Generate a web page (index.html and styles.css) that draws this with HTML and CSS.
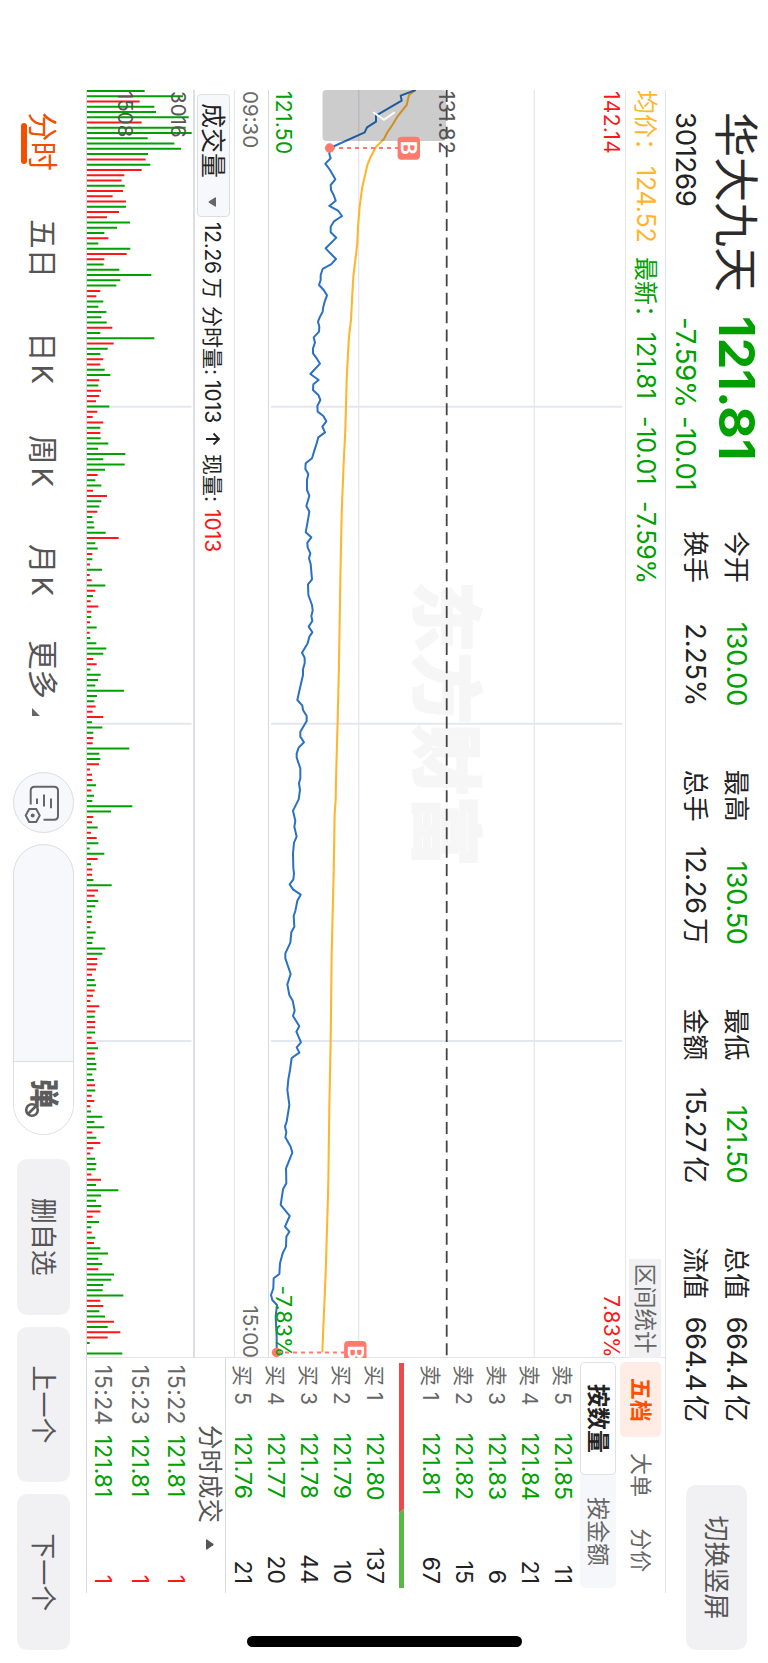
FILE: index.html
```html
<!DOCTYPE html>
<html lang="zh-CN">
<head>
<meta charset="utf-8">
<title>华大九天 301269</title>
<link rel="stylesheet" href="styles.css">
</head>
<body>
<div class="viewport">
<div class="stage">
  <header class="header">
    <div class="quote">
      <div class="quote-top"><h1 class="name">华大九天</h1><span class="price down">121.81</span></div>
      <div class="quote-sub"><span class="code">301269</span><span class="pct down">-7.59%</span><span class="down">-10.01</span></div>
    </div>
    <dl class="stats">
      <div class="stat"><dt>今开</dt><dd class="down">130.00</dd></div>
      <div class="stat"><dt>最高</dt><dd class="down">130.50</dd></div>
      <div class="stat"><dt>最低</dt><dd class="down">121.50</dd></div>
      <div class="stat"><dt>总值</dt><dd>664.4<small>亿</small></dd></div>
      <div class="stat"><dt>换手</dt><dd>2.25%</dd></div>
      <div class="stat"><dt>总手</dt><dd>12.26<small>万</small></dd></div>
      <div class="stat"><dt>金额</dt><dd>15.27<small>亿</small></dd></div>
      <div class="stat"><dt>流值</dt><dd>664.4<small>亿</small></dd></div>
    </dl>
    <button class="btn rotate-btn">切换竖屏</button>
  </header>

  <main class="main">
    <section class="charts">
      <div class="info">
        <span class="avg info-a">均价：</span><span class="avg info-b">124.52</span>
        <span class="down info-c">最新：</span><span class="down info-d">121.81</span>
        <span class="down info-e">-10.01</span><span class="down">-7.59%</span>
        <span class="range">区间统计</span>
      </div>
      <div class="plot">
        <svg class="canvas" width="1268" height="357" viewBox="90 143 1268 357">
          <text class="watermark" x="581" y="348">东方财富</text>
          <g class="grid">
            <path d="M90 233.7H1358M90 409.3H1358"/>
            <path class="grid-v" d="M406.7 146V497M723.8 146V497M1041 146V497"/>
          </g>
          <path class="axis" d="M90 499.5H1358"/>
          <path class="mid" d="M90 321.3H1358"/>
          <g id="lines"></g>
          <path class="shade" d="M90 322H137Q141 322 141 326V441.500Q141 445.500 137 445.500H94Q90 445.500 90 441.500V326Q90 322 94 322Z"/>
          <path class="chev" d="M112.300 394.700L119.700 384L112.300 373.300"/>
          <g class="mark">
            <path d="M148 437V370M1352.500 491V424"/>
            <circle cx="148" cy="438.400" r="4.700"/><circle cx="1352.500" cy="491.500" r="4.700"/>
            <rect x="136.700" y="348" width="23" height="22.400" rx="4"/>
            <rect x="1341" y="401.500" width="23" height="22.400" rx="4"/>
            <text x="140.800" y="367">B</text><text x="1345.200" y="420.500">B</text>
          </g>
        </svg>
        <span class="lab top-l up">142.14</span><span class="lab top-r up">7.83%</span>
        <span class="lab mid-l">131.82</span>
        <span class="lab bot-l down">121.50</span><span class="lab bot-r down">-7.83%</span>
      </div>
      <div class="times"><span>09:30</span><span>15:00</span></div>
      <div class="vol-head">
        <div class="select">成交量<svg width="10" height="8" viewBox="0 0 10 8"><path d="M1 0H9Q10 0 9.500 1L5.700 7Q5 8 4.300 7L.5 1Q0 0 1 0Z"/></svg></div>
        <span class="v-a">12.26<small>万</small></span><span class="v-b">分时量:</span><span class="v-c">1013</span>
        <svg class="arrow" width="14" height="16" viewBox="0 0 14 16"><path d="M7 15V2M1.500 7.500L7 2L12.500 7.500"/></svg>
        <span class="v-d">现量:</span><span class="up">1013</span>
      </div>
      <div class="volume">
        <svg class="canvas" width="1268" height="106" viewBox="90 575.500 1268 106">
          <path class="grid-v" d="M406.700 577V681M723.800 577V681M1041 577V681"/>
          <g id="bars"></g>
        </svg>
        <span class="lab vol-1">3016</span><span class="lab vol-2">1508</span>
      </div>
    </section>

    <aside class="panel">
      <nav class="tabs"><span class="tab on">五档</span><span class="tab">大单</span><span class="tab">分价</span></nav>
      <div class="seg"><span class="seg-item on">按数量</span><span class="seg-item">按金额</span></div>
      <div class="book sell">
        <div class="row"><i>卖 5</i><b>121.85</b><em>11</em></div>
        <div class="row"><i>卖 4</i><b>121.84</b><em>21</em></div>
        <div class="row"><i>卖 3</i><b>121.83</b><em>6</em></div>
        <div class="row"><i>卖 2</i><b>121.82</b><em>15</em></div>
        <div class="row"><i>卖 1</i><b>121.81</b><em>67</em></div>
      </div>
      <svg class="ratio" width="225" height="5" viewBox="0 0 225 5"><path fill="#ee4a4a" d="M0 0H146L150 5H0Z"/><path fill="#58b947" d="M146 0H225V5H150Z"/></svg>
      <div class="book buy">
        <div class="row"><i>买 1</i><b>121.80</b><em>137</em></div>
        <div class="row"><i>买 2</i><b>121.79</b><em>10</em></div>
        <div class="row"><i>买 3</i><b>121.78</b><em>44</em></div>
        <div class="row"><i>买 4</i><b>121.77</b><em>20</em></div>
        <div class="row"><i>买 5</i><b>121.76</b><em>21</em></div>
      </div>
      <div class="deal-head">分时成交<svg width="11" height="8" viewBox="0 0 11 8"><path d="M1 8H10Q11 8 10.500 7L6.300 .8Q5.500 0 4.700 .8L.5 7Q0 8 1 8Z"/></svg></div>
      <div class="deals">
        <div class="row"><i>15:22</i><b>121.81</b><em class="up">1</em></div>
        <div class="row"><i>15:23</i><b>121.81</b><em class="up">1</em></div>
        <div class="row"><i>15:24</i><b>121.81</b><em class="up">1</em></div>
      </div>
    </aside>
  </main>

  <footer class="footer">
    <nav class="periods">
      <span class="p p1 on">分时</span><span class="p p2">五日</span><span class="p p3">日<u>K</u></span><span class="p p4">周<u>K</u></span><span class="p p5">月<u>K</u></span><span class="p p6">更多<svg width="8" height="8" viewBox="0 0 8 8"><path d="M8 0V8H0Z"/></svg></span>
    </nav>
    <div class="round">
      <svg width="60" height="60" viewBox="0 0 60 60">
        <path d="M31.500 42.300H17.800Q13.800 42.300 13.800 38.300V19Q13.800 15 17.800 15H42.800Q46.800 15 46.800 19V29.500"/>
        <path d="M25.500 22H35.200M21.500 29H33.500M25.500 36H31"/>
        <path d="M42.500 33.300L49 36.800V43.800L42.500 47.300L36 43.800V36.800Z"/>
        <circle class="dot" cx="42.500" cy="40.300" r="2"/>
      </svg>
    </div>
    <div class="danmu">
      <div class="danmu-btn"><span>弹</span>
        <svg class="ban" width="16" height="16" viewBox="0 0 16 16"><circle cx="8" cy="8" r="5.800"/><path d="M4 4L12 12"/></svg>
      </div>
    </div>
    <div class="actions"><button class="btn">删自选</button><button class="btn">上一个</button><button class="btn">下一个</button></div>
  </footer>
  <div class="home"></div>
</div>
</div>
<script src="chart.js"></script>
</body>
</html>
```

FILE: styles.css
```css
* { box-sizing: border-box; margin: 0; padding: 0; }
html, body { width: 768px; height: 1663px; overflow: hidden; background: #fff; }
.viewport { width: 768px; height: 1663px; overflow: hidden; }
.stage {
  position: relative;
  width: 1663px; height: 768px;
  display: grid; grid-template-rows: 102px 580px 86px;
  transform-origin: 0 0; transform: translateX(768px) rotate(90deg);
  font-family: Inter, "Noto Sans CJK SC", sans-serif;
  color: #222; background: #fff; line-height: 1; white-space: nowrap;
}
.down { color: #00a000; }
.up { color: #fb1818; }
i, em, b, u { font-style: normal; font-weight: 400; text-decoration: none; }
small { font-size: inherit; margin-left: 4px; letter-spacing: 0; }
button { border: 0; font-family: inherit; }
.btn { background: #f1f1f4; color: #555; border-radius: 10px; font-size: 26px; line-height: 1; }

.header { display: flex; padding: 0 13px 0 112px; }
.quote { width: 419px; }
.quote-top { display: flex; height: 62px; align-items: center; }
.name { width: 204px; padding-top: 2px; font-size: 45px; font-weight: 400; letter-spacing: 0; color: #2b2b2b; }
.price { font-size: 50px; font-weight: 700; letter-spacing: .1px; }
.quote-sub { display: flex; height: 40px; padding-top: 1px; align-items: center; font-size: 27.500px; letter-spacing: -.3px; }
.code { width: 205px; }
.pct { width: 99px; }
.stats { width: 892px; padding-top: 11px; display: grid; grid-template-columns: repeat(4, 175px); column-gap: 63.700px; grid-auto-rows: 41px; font-size: 27px; letter-spacing: -.2px; }
.stat { display: flex; justify-content: space-between; align-items: center; }
.stat dt { font-size: 26px; letter-spacing: 0; }
.rotate-btn { width: 165px; height: 61px; margin: 21px 0 0 62px; flex: none; }

.main { display: grid; grid-template-columns: 1268px 235px; margin-left: 90px; width: 1503px; border-top: 1px solid #e3e4ea; border-bottom: 1px solid #d9dadf; }
.charts { display: grid; grid-template-rows: 40px 357px 34px 41px 106px; border-right: 1px solid #e3e4ea; }
.info { display: flex; align-items: center; border-bottom: 1px solid #e6e7ee; font-size: 25px; letter-spacing: -.2px; }
.avg { color: #ffb52e; }
.info-a { width: 76px; font-size: 24px; letter-spacing: 0; }
.info-b { width: 91px; }
.info-c { width: 75px; font-size: 24px; letter-spacing: 0; }
.info-d { width: 84px; }
.info-e { width: 85px; }
.range { margin-left: auto; width: 99px; height: 32px; line-height: 32px; text-align: center; background: #f1f1f4; color: #666; font-size: 22.500px; letter-spacing: 0; }
.plot, .volume { position: relative; }
.canvas { display: block; }
.grid path, .grid-v { stroke: #e5e7f0; stroke-width: 1.300; fill: none; }
.grid .grid-v, .grid-v { stroke-width: 2; }
.axis { stroke: #d8d9df; stroke-width: 1.200; }
.mid { stroke: #444; stroke-width: 1.800; stroke-dasharray: 12 6.430; }
.watermark { font: 900 71.500px "Noto Sans CJK SC", sans-serif; fill: #f6f6f6; stroke: #f6f6f6; stroke-width: 1.500; }
.price-line { fill: none; stroke: #2a70c5; stroke-width: 6; stroke-linejoin: round; }
.avg-line { fill: none; stroke: #ffb52e; stroke-width: 6.200; stroke-linejoin: round; }
.shade { fill: #000; opacity: .2; }
.chev { fill: none; stroke: #fff; stroke-width: 2; }
.mark path { stroke: #fe7a6c; stroke-width: 2; stroke-dasharray: 4 4; }
.mark circle, .mark rect { fill: #fe7a6c; }
.mark text { font: 600 21.500px Inter, sans-serif; fill: #fff; }
.lab { position: absolute; font-size: 21px; letter-spacing: .3px; color: #555; }
.lab.up { color: #fb1818; }
.lab.down { color: #00a000; }
.top-l { left: 1px; top: 3px; }
.top-r { right: 0; top: 3px; }
.mid-l { left: 1px; top: 168px; }
.bot-l { left: 1px; top: 331px; }
.bot-r { right: 0; top: 331px; }
.vol-1 { left: 1px; top: 5px; }
.vol-2 { left: 1px; top: 58px; }
.lab.vol-1, .lab.vol-2 { font-size: 20.500px; letter-spacing: 0; }
.times { display: flex; justify-content: space-between; align-items: center; padding: 4px 0 0 1px; font-size: 20.500px; color: #6a6a6a; border-bottom: 1px solid #e6e7ee; }
.vol-head { display: flex; align-items: center; padding: 3px 0 0 4px; font-size: 21px; border-bottom: 2px solid #dedfe6; }
.select { width: 123px; height: 33px; display: flex; align-items: center; padding: 2px 0 0 8px; font-size: 25px; background: #f7f8fb; border: 1px solid #dcdee5; border-radius: 4px; margin: -1px 5px 0 0; }
.select svg { margin-left: 19px; fill: #666; }
.v-a { width: 84px; letter-spacing: -.3px; }
.v-b { width: 74px; }
.v-c { width: 52px; }
.arrow { fill: none; stroke: #222; stroke-width: 1.800; margin-right: 8px; }
.v-d { width: 55px; }
.bar-down { stroke: #00a000; }
.bar-up { stroke: #fb1818; }
.bar-down, .bar-up { stroke-width: 2; fill: none; }

.panel { padding: 4px 5px 0 4px; }
.tabs { display: flex; height: 40.500px; }
.tab { width: 75.500px; display: flex; align-items: center; justify-content: center; font-size: 22px; color: #666; }
.tab.on { background: #ffece4; color: #ff5000; font-weight: 700; border-radius: 5px; }
.seg { display: flex; height: 36px; margin: 4px 0 1px; background: #f6f7fa; border-radius: 5px; }
.seg-item { width: 113px; display: flex; align-items: center; justify-content: center; padding-top: 1px; font-size: 23px; color: #666; }
.seg-item.on { background: #fff; border: 1px solid #dfe0e6; border-radius: 5px; color: #222; font-weight: 700; }
.row { display: grid; grid-template-columns: 68px 82px 1fr; height: 33px; align-items: center; padding: 0 4px 0 3px; font-size: 23px; letter-spacing: 0; }
.row i { color: #666; font-size: 21px; }
.row b { color: #00a000; }
.row em { text-align: right; }
.ratio { display: block; margin: 10px 0 8px 1px; }
.deal-head { height: 32px; margin: 0 -5px 0 -4px; border-top: 1px solid #d9dae2; display: flex; align-items: center; padding-left: 67px; font-size: 24.500px; color: #555; }
.deal-head svg { margin-left: 16px; fill: #555; }
.deals .row { height: 36.600px; grid-template-columns: 70px 80px 1fr; padding-top: 1px; }
.deals .row i { font-size: 23px; letter-spacing: .4px; }
.deals .row b { letter-spacing: 0; }

.footer { display: flex; padding: 0 13px 2px 112px; align-items: center; }
.periods { display: flex; width: 660px; height: 84px; padding-top: 4px; align-items: center; font-size: 29.500px; color: #555; }
.p { position: relative; }
.p u { margin-left: 3px; font-size: 29px; }
.p1 { width: 107px; } .p2 { width: 113px; } .p3 { width: 103px; } .p4 { width: 109px; } .p5 { width: 96px; }
.p1.on { color: #f05000; }
.p1.on::after { content: ""; position: absolute; left: 11px; top: 30px; width: 41px; height: 6px; border-radius: 3px; background: #f05000; }
.p6 svg { margin-left: 9px; fill: #666; }
.round { width: 61px; height: 61px; border: 1px solid #dcdde3; border-radius: 50%; background: #f7f8fb; margin-right: 11px; flex: none; }
.round svg { display: block; fill: none; stroke: #666; stroke-width: 2; }
.round .dot { fill: #666; stroke: none; }
.danmu { width: 291px; height: 61px; border: 1px solid #dcdde3; border-radius: 31px; background: #f7f8fb; display: flex; justify-content: flex-end; overflow: hidden; flex: none; }
.danmu-btn { position: relative; width: 73px; background: #fff; border-left: 1px solid #dcdde3; padding: 15px 0 0 17px; font-size: 29px; font-weight: 900; color: #5c5c5c; }
.ban { position: absolute; left: 40px; top: 33px; fill: #fff; stroke: #5c5c5c; stroke-width: 2.600; }
.actions { display: flex; gap: 12px; margin-left: 24px; }
.actions .btn { width: 155.700px; height: 53px; padding-top: 2px; }
.home { position: absolute; left: 1636px; top: 246px; width: 11px; height: 275px; border-radius: 6px; background: #000; }
```

FILE: chart.js
```js
// Chart points are [time, height] pairs in thirds of a pixel; height grows upwards.
const price = [[270,1247],[287,1202],[302,1205],[347,1128],[365,1128],[382,1101],[397,1094],[435,1010],[444,990],[462,988],[475,992],[491,976],[510,990],[538,1006],[555,992],[570,993],[585,1001],[602,1007],[618,988],[633,1015],[648,1026],[664,1002],[680,992],[697,992],[713,1009],[745,977],[760,991],[777,1008],[793,993],[807,968],[825,962],[840,962],[855,957],[870,971],[886,981],[905,974],[925,969],[935,968],[950,960],[965,954],[980,958],[995,957],[1012,941],[1028,945],[1045,939],[1060,939],[1075,950],[1091,960],[1122,931],[1140,956],[1153,940],[1170,939],[1185,955],[1200,961],[1218,952],[1235,953],[1248,970],[1264,979],[1280,967],[1297,975],[1312,955],[1330,950],[1352,943],[1375,936],[1390,917],[1407,916],[1422,925],[1440,921],[1470,921],[1487,928],[1518,919],[1535,928],[1565,923],[1597,917],[1612,934],[1628,922],[1642,923],[1660,931],[1675,927],[1692,932],[1738,936],[1753,924],[1785,925],[1815,936],[1832,938],[1848,934],[1863,937],[1880,926],[1897,937],[1910,928],[1930,923],[1958,906],[1973,914],[1990,914],[2008,909],[2025,909],[2055,902],[2100,892],[2117,907],[2130,909],[2148,920],[2163,920],[2195,901],[2210,901],[2227,912],[2243,896],[2260,890],[2273,890],[2305,901],[2335,901],[2350,897],[2370,900],[2398,896],[2432,879],[2463,886],[2480,883],[2510,890],[2528,882],[2560,879],[2605,880],[2620,882],[2638,880],[2653,869],[2668,879],[2684,902],[2702,892],[2733,886],[2748,881],[2780,883],[2797,874],[2828,871],[2860,856],[2875,856],[2922,872],[2953,862],[2985,868],[3002,878],[3032,884],[3048,879],[3079,898],[3095,889],[3127,903],[3142,890],[3158,898],[3174,875],[3210,870],[3238,865],[3270,862],[3315,868],[3365,860],[3380,855],[3397,859],[3412,856],[3440,872],[3458,877],[3505,858],[3550,859],[3568,849],[3615,842],[3648,869],[3680,855],[3695,868],[3710,859],[3740,858],[3760,848],[3790,840],[3822,838],[3835,821],[3865,820],[3885,813],[3900,817],[3915,831],[3950,827],[4010,830],[4058,830]];
const average = [[270,1247],[285,1227],[315,1220],[350,1192],[375,1177],[397,1162],[417,1152],[442,1127],[475,1110],[495,1102],[530,1094],[560,1087],[620,1079],[680,1074],[730,1072],[780,1066],[830,1060],[880,1057],[960,1053],[1010,1047],[1060,1044],[1140,1040],[1290,1036],[1390,1031],[1540,1025],[1740,1021],[1990,1017],[2160,1013],[2340,1008],[2400,1007],[2440,1004],[2620,1001],[2860,995],[3120,992],[3320,988],[3540,985],[3620,983],[3820,977],[4030,968],[4057,967]];

// One entry per minute: bar length in thirds of a pixel, negative when the minute closed higher.
const volume = [173,288,-158,202,207,305,-164,296,314,182,262,282,183,-176,190,-164,-112,-104,113,-108,-77,-117,117,-96,-60,129,90,52,-64,34,130,-119,-52,50,97,193,100,88,-40,-28,49,34,58,43,59,-76,40,202,-80,62,40,-49,-40,53,70,-37,34,-42,-37,-27,67,-31,-17,-49,40,-40,41,64,33,115,49,113,54,-32,25,43,-18,-60,43,37,-31,16,20,22,56,-95,25,32,-16,16,-9,45,-8,-14,55,-25,18,-11,-34,-13,13,-9,29,-8,10,28,58,49,-19,-29,10,41,33,25,111,30,22,-26,-17,-49,15,46,19,-19,-17,127,37,40,-36,-9,-15,-16,27,-13,21,16,136,72,-19,-15,32,-12,-29,34,8,52,-32,12,-16,-15,19,74,-33,-23,34,25,13,15,-13,10,26,19,16,55,46,-31,-31,-27,-15,23,27,-23,-18,-10,-37,-25,23,-25,-24,24,-14,-26,33,-23,24,28,28,16,21,-24,25,-14,-22,-10,12,46,22,52,-16,28,-40,-19,-10,24,28,26,-13,-42,27,94,42,27,43,-40,-17,36,13,-14,25,-21,40,63,34,46,-34,81,73,49,47,109,-40,-49,37,54,-81,62,-100,-62,8,0,106];

const NS = "http://www.w3.org/2000/svg";
function addPath(parent, className, d) {
  const path = document.createElementNS(NS, "path");
  path.setAttribute("class", className);
  path.setAttribute("d", d);
  parent.appendChild(path);
}
const toLine = points => "M" + points.map(([t, h]) => `${t} ${2304 - h}`).join("L");

const lines = document.getElementById("lines");
lines.setAttribute("transform", "scale(0.33333)");
addPath(lines, "avg-line", toLine(average));
addPath(lines, "price-line", toLine(price));

const bars = document.getElementById("bars");
let rising = "", falling = "";
volume.forEach((v, i) => {
  if (!v) return;
  const d = `M${(91 + i * 5.26).toFixed(2)} 681.500v${(-Math.abs(v) / 3).toFixed(2)}`;
  if (v < 0) rising += d; else falling += d;
});
addPath(bars, "bar-down", falling);
addPath(bars, "bar-up", rising);
```
